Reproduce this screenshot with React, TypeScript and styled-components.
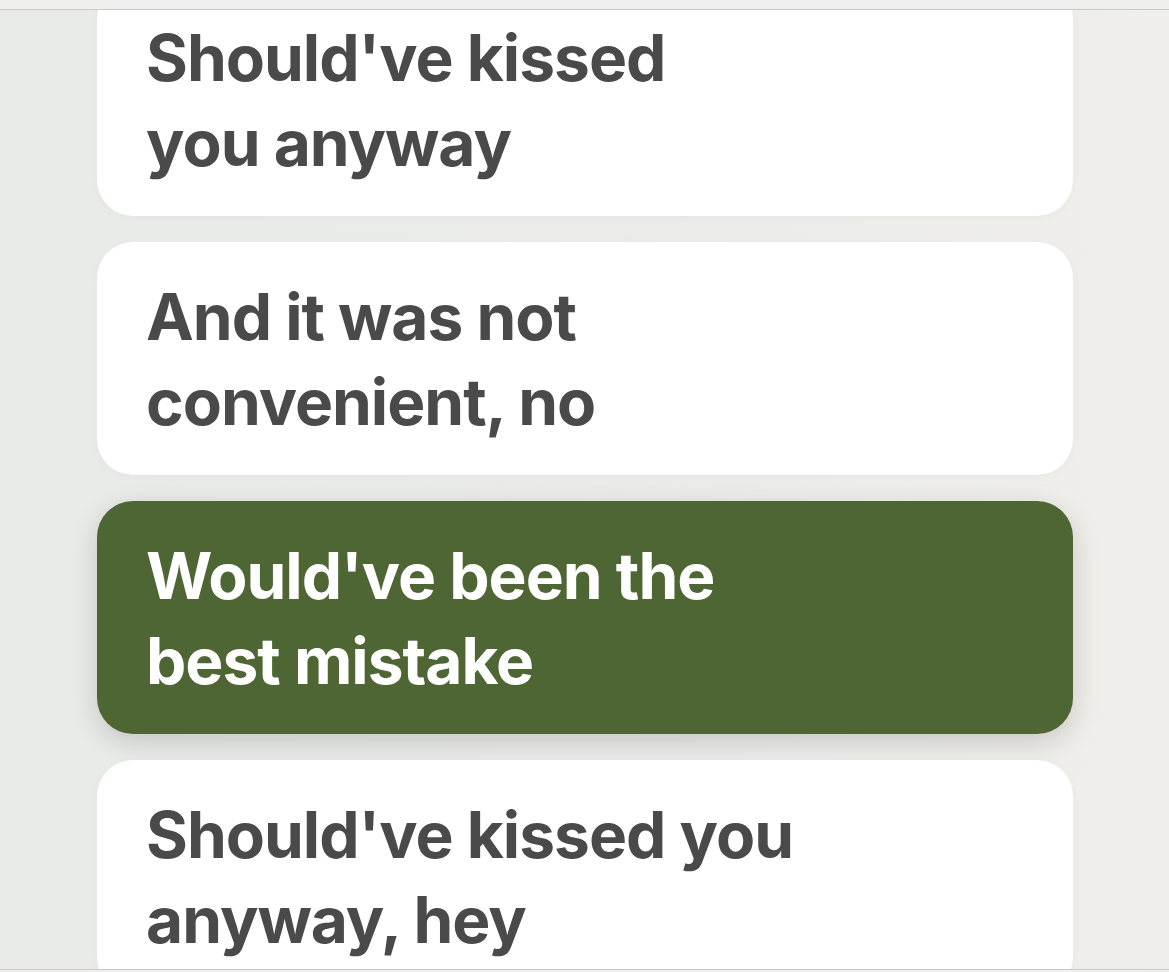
import styled, { createGlobalStyle } from 'styled-components'

const GlobalStyle = createGlobalStyle`
	html, body {
		margin: 0;
		height: 100%;
		overflow: hidden;
	}
	body {
		font-family: Inter, "Noto Sans", sans-serif;
	}
`

const Frame = styled.div`
	height: 972px;
	display: flex;
	flex-direction: column;
	background: #f0f0ef;
`

const TopStrip = styled.div`
	height: 9px;
	flex-shrink: 0;
	background: #efefee;
	border-bottom: 1px solid #c9c9c8;
`

const Viewport = styled.main`
	flex: 1;
	overflow: hidden;
	background: linear-gradient(90deg, #e8ebe8 0%, #ebecea 50%, #efeeea 100%);
`

const BottomStrip = styled.div`
	height: 2px;
	flex-shrink: 0;
	background: #efefee;
	border-top: 1px solid #c9c9c8;
`

const List = styled.ul`
	list-style: none;
	margin: -27px 0 0;
	padding: 0 96px 0 97px;
	display: flex;
	flex-direction: column;
	gap: 26px;
`

const Line = styled.li<{ $active?: boolean }>`
	height: 233px;
	box-sizing: border-box;
	padding: 0 49px;
	display: flex;
	align-items: center;
	border-radius: 36px;
	background: ${({ $active }) => ($active ? '#4e6633' : '#ffffff')};
	color: ${({ $active }) => ($active ? '#ffffff' : '#4a4a4a')};
	box-shadow: ${({ $active }) =>
		$active ? '0 8px 28px rgba(0, 0, 0, 0.16)' : '0 2px 10px rgba(0, 0, 0, 0.03)'};
	font-size: 64px;
	font-weight: 700;
	line-height: 85px;
	letter-spacing: -1px;
`

const lyrics = [
	{ text: ['Should\'ve kissed', 'you anyway'] },
	{ text: ['And it was not', 'convenient, no'] },
	{ text: ['Would\'ve been the', 'best mistake'], active: true },
	{ text: ['Should\'ve kissed you', 'anyway, hey'] },
]

const App = () => {
	return (
		<>
			<GlobalStyle />
			<Frame>
				<TopStrip />
				<Viewport>
					<List>
						{lyrics.map((l, i) => (
							<Line key={i} $active={l.active}>
								<span>
									{l.text[0]}
									<br />
									{l.text[1]}
								</span>
							</Line>
						))}
					</List>
				</Viewport>
				<BottomStrip />
			</Frame>
		</>
	)
}

export default App
